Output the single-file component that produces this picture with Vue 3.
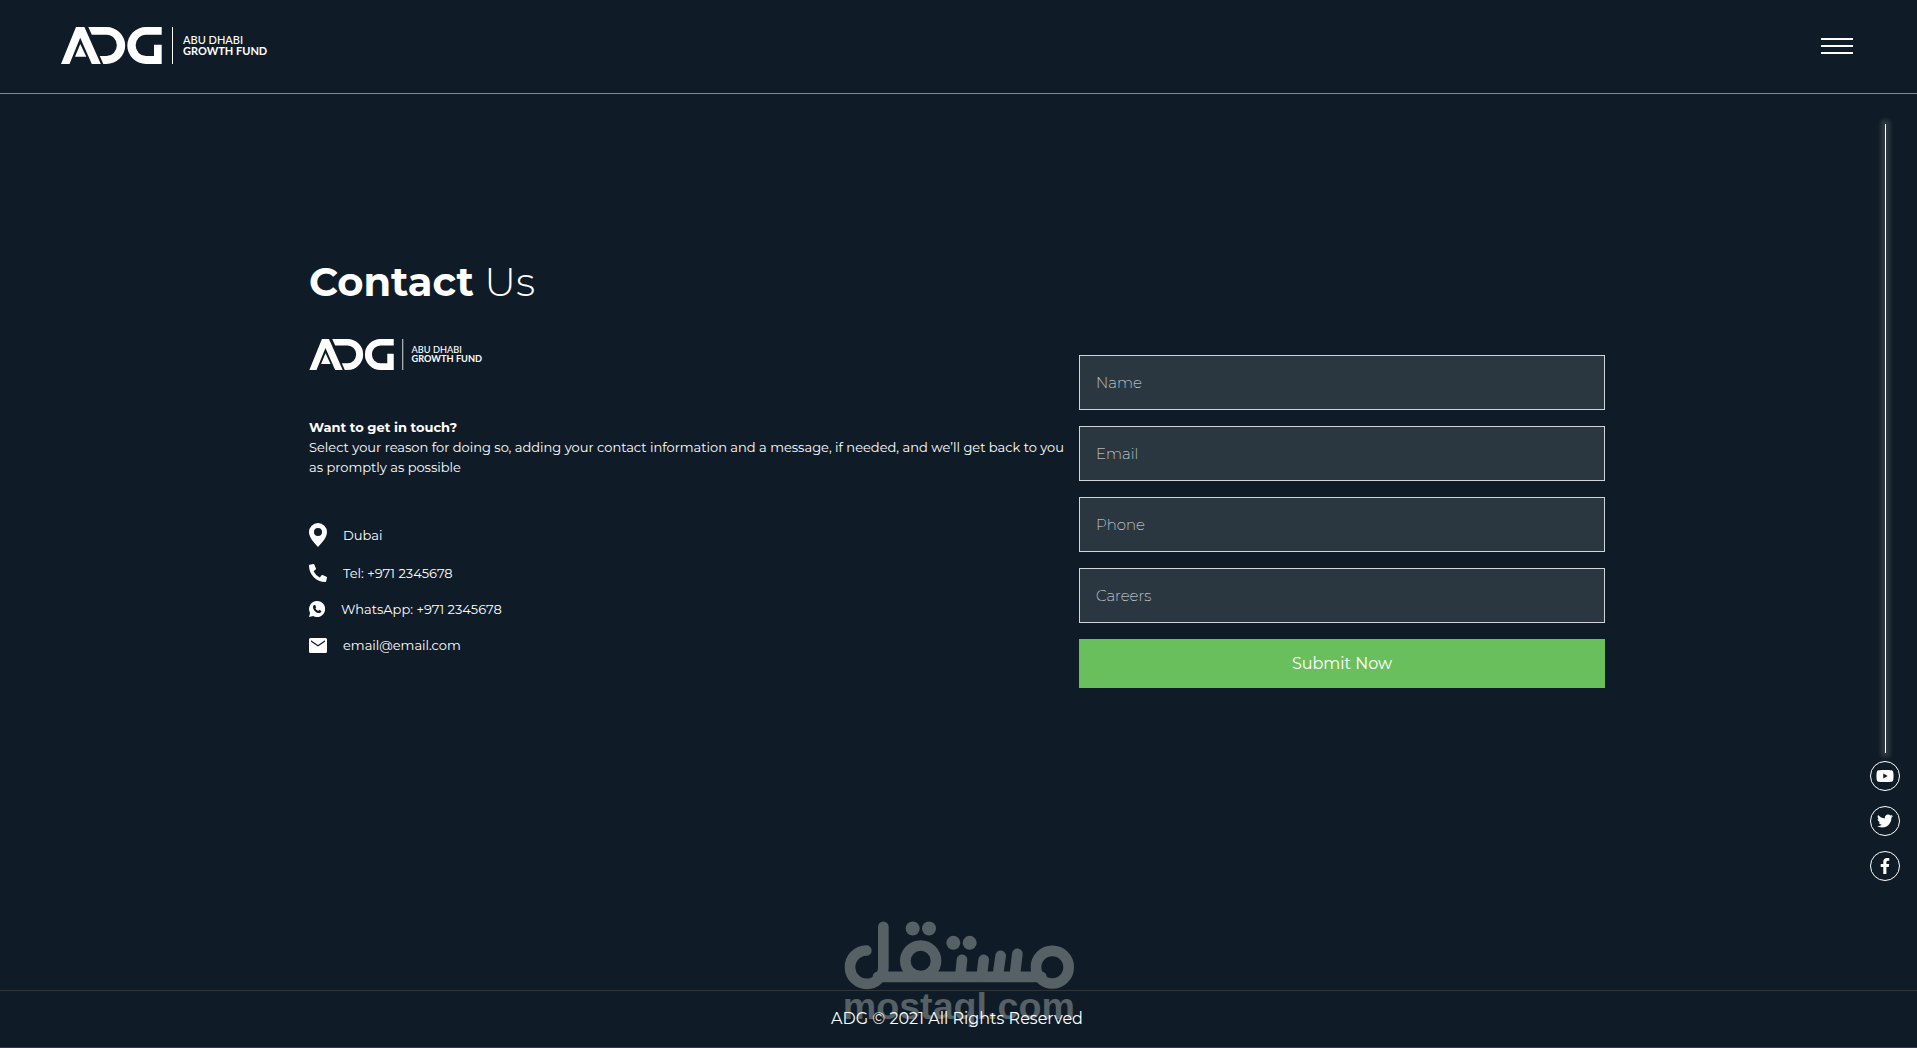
<template>
  <div class="page">
    <header class="header">
      <a href="#" aria-label="Abu Dhabi Growth Fund">
        <svg class="logo" width="208" height="37" viewBox="0 0 208 37">
          <g id="adg-logo">
            <path d="M0 37 15 0h8.400L39.800 37H30.800L19.200 10.800 8.500 37Z" />
            <path d="M19.300 17 25.300 29.700H14Z" />
            <path
              d="M27.300 0H45.500A18.700 18.500 0 0 1 45.500 37H42.300L38.800 29H45.500A10.300 10.600 0 0 0 45.500 7.700H30.800Z"
            />
            <path
              d="M100.700 0H85A18.700 18.500 0 0 0 85 37H100.700V17.700H93V29H85A10.300 10.600 0 0 1 85 7.700H100.700Z"
            />
            <path d="M111 0h1v37h-1z" />
            <text x="122" y="17" class="logo-text">ABU DHABI</text>
            <text x="122" y="28" class="logo-text strong">GROWTH FUND</text>
          </g>
        </svg>
      </a>
      <button class="menu-btn" type="button" aria-label="Menu">
        <span v-for="n in 3" :key="n"></span>
      </button>
    </header>

    <main class="main">
      <div class="container">
        <section class="info">
          <h1><strong>Contact</strong> Us</h1>
          <svg class="logo" width="175" height="31" viewBox="0 0 208 37">
            <use href="#adg-logo" />
          </svg>
          <div class="intro">
            <h2>Want to get in touch?</h2>
            <p>
              Select your reason for doing so, adding your contact information and a message, if
              needed, and we’ll get back to you as promptly as possible
            </p>
          </div>
          <ul class="contacts">
            <li v-for="item in contacts" :key="item.text">
              <svg
                :width="item.width"
                :height="item.height"
                :viewBox="item.viewBox"
                aria-hidden="true"
              >
                <path fill-rule="evenodd" :d="item.path" />
              </svg>
              <span>{{ item.text }}</span>
            </li>
          </ul>
        </section>

        <form class="form" @submit.prevent>
          <input
            v-for="field in fields"
            :key="field.name"
            v-model="form[field.name]"
            :type="field.type"
            :name="field.name"
            :placeholder="field.label"
            :aria-label="field.label"
          />
          <button type="submit">Submit Now</button>
        </form>
      </div>
    </main>

    <aside class="social">
      <div class="social-line"></div>
      <a v-for="item in socials" :key="item.name" href="#" :aria-label="item.name">
        <svg :width="item.width" height="16" :viewBox="item.viewBox"><path :d="item.path" /></svg>
      </a>
    </aside>

    <footer class="footer">
      <svg class="watermark" width="230" height="107" viewBox="98 62 690 320" aria-hidden="true">
        <g class="strokes">
          <path d="M165 150A50 50 0 1 0 216 200V79" />
          <path d="M200 229H690" />
          <circle cx="328" cy="181" r="46" />
          <path d="M452 178 447 228M517 178 511 228M568 166 559 228M618 160 610 228" />
          <circle cx="723" cy="200" r="49" />
        </g>
        <circle cx="304" cy="84" r="21" />
        <circle cx="353" cy="84" r="21" />
        <circle cx="426" cy="127" r="21" />
        <circle cx="475" cy="127" r="21" />
        <text x="94" y="356">mostaql.com</text>
      </svg>
      <p>ADG © 2021 All Rights Reserved</p>
    </footer>
  </div>
</template>

<script setup>
import { reactive } from 'vue'

const form = reactive({
  name: '',
  email: '',
  phone: '',
  careers: ''
})

const fields = [
  { name: 'name', label: 'Name', type: 'text' },
  { name: 'email', label: 'Email', type: 'email' },
  { name: 'phone', label: 'Phone', type: 'tel' },
  { name: 'careers', label: 'Careers', type: 'text' }
]

const contacts = [
  {
    text: 'Dubai',
    width: 18,
    height: 24,
    viewBox: '0 0 18 24',
    path: 'M9 0a9 9 0 0 0-9 9c0 5.500 5 10.500 9 15 4-4.500 9-9.500 9-15a9 9 0 0 0-9-9Zm0 5a4 4 0 1 1 0 8 4 4 0 0 1 0-8Z'
  },
  {
    text: 'Tel: +971 2345678',
    width: 18,
    height: 18,
    viewBox: '0 0 512 512',
    path: 'M497.390 361.800l-112-48a24 24 0 0 0-28 6.900l-49.600 60.600A370.660 370.660 0 0 1 130.600 204.110l60.600-49.600a23.940 23.940 0 0 0 6.900-28l-48-112A24.160 24.160 0 0 0 122.600.610l-104 24A24 24 0 0 0 0 48c0 256.500 207.900 464 464 464a24 24 0 0 0 23.400-18.600l24-104a24.290 24.290 0 0 0-14.010-27.600z'
  },
  {
    text: 'WhatsApp: +971 2345678',
    width: 16,
    height: 16,
    viewBox: '0 0 16 16',
    path: 'M8 0a8 8 0 0 0-6.900 12L0 16l4.100-1.100A8 8 0 1 0 8 0ZM5.200 4h.7c.2 0 .4.1.5.4l.7 1.600c.1.200 0 .4-.1.600l-.6.700c.6 1.200 1.400 2 2.800 2.600l.7-.9c.2-.2.400-.2.600-.1l1.500.8c.3.100.4.300.3.600-.1 1.100-1 1.800-2.100 1.800C6.600 11.900 4 8.500 4 6.200 4 5.200 4.500 4 5.200 4Z'
  },
  {
    text: 'email@email.com',
    width: 18,
    height: 15,
    viewBox: '0 0 18 15',
    path: 'M1.500 0h15A1.500 1.500 0 0 1 18 1.500v12a1.500 1.500 0 0 1-1.500 1.500h-15A1.500 1.500 0 0 1 0 13.500v-12A1.500 1.500 0 0 1 1.500 0ZM2 2.300v1.500l7 4.700 7-4.700V2.300L9 7Z'
  }
]

const socials = [
  {
    name: 'YouTube',
    width: 18,
    viewBox: '0 0 576 512',
    path: 'M549.655 124.083c-6.281-23.650-24.787-42.276-48.284-48.597C458.781 64 288 64 288 64S117.220 64 74.629 75.486c-23.497 6.322-42.003 24.947-48.284 48.597-11.412 42.867-11.412 132.305-11.412 132.305s0 89.438 11.412 132.305c6.281 23.650 24.787 41.500 48.284 47.821C117.220 448 288 448 288 448s170.780 0 213.371-11.486c23.497-6.321 42.003-24.171 48.284-47.821 11.412-42.867 11.412-132.305 11.412-132.305s0-89.438-11.412-132.305zm-317.510 213.508V175.185l142.739 81.205-142.739 81.201z'
  },
  {
    name: 'Twitter',
    width: 16,
    viewBox: '0 0 512 512',
    path: 'M459.370 151.716c.325 4.548.325 9.097.325 13.645 0 138.720-105.583 298.558-298.558 298.558-59.452 0-114.680-17.219-161.137-47.106 8.447.974 16.568 1.299 25.340 1.299 49.055 0 94.213-16.568 130.274-44.832-46.132-.975-84.792-31.188-98.112-72.772 6.498.974 12.995 1.624 19.818 1.624 9.421 0 18.843-1.300 27.614-3.573-48.081-9.747-84.143-51.980-84.143-102.985v-1.299c13.969 7.797 30.214 12.670 47.431 13.319-28.264-18.843-46.781-51.005-46.781-87.391 0-19.492 5.197-37.360 14.294-52.954 51.655 63.675 129.300 105.258 216.365 109.807-1.624-7.797-2.599-15.918-2.599-24.040 0-57.828 46.782-104.934 104.934-104.934 30.213 0 57.502 12.670 76.670 33.137 23.715-4.548 46.456-13.320 66.599-25.340-7.798 24.366-24.366 44.833-46.132 57.827 21.117-2.273 41.584-8.122 60.426-16.243-14.292 20.791-32.161 39.308-52.628 54.253z'
  },
  {
    name: 'Facebook',
    width: 10,
    viewBox: '0 0 320 512',
    path: 'M279.140 288l14.220-92.660h-88.910v-60.130c0-25.350 12.420-50.060 52.240-50.060h40.420V6.260S260.430 0 225.360 0c-73.220 0-121.080 44.380-121.080 124.720v70.620H22.890V288h81.390v224h100.170V288z'
  }
]
</script>

<style>
body {
  margin: 0;
  background: #0f1c28;
}
</style>

<style scoped>
.page {
  position: relative;
  display: flex;
  flex-direction: column;
  min-height: 100vh;
  color: #fff;
  background: #0f1c28;
  font-family: Montserrat, Inter, sans-serif;
  font-size: 13px;
  line-height: 20px;
}

h1,
h2,
p,
ul {
  margin: 0;
  padding: 0;
}

.logo {
  display: block;
  fill: #fff;
}

.logo-text {
  font-family: Lato, sans-serif;
  font-size: 11px;
  font-weight: 500;
}

.logo-text.strong {
  font-weight: 700;
}

/* Header */
.header {
  display: flex;
  align-items: center;
  justify-content: space-between;
  padding: 27px 64px 29px 61px;
  border-bottom: 1px solid #85898c;
}

.menu-btn {
  display: flex;
  flex-direction: column;
  gap: 5px;
  width: 32px;
  padding: 0;
  border: 0;
  background: none;
  cursor: pointer;
}

.menu-btn span {
  height: 2px;
  background: #fff;
}

/* Contact */
.main {
  flex: 1;
  padding: 164px 3px 64px 0;
}

.container {
  display: grid;
  grid-template-columns: 7fr 5fr;
  box-sizing: border-box;
  max-width: 1320px;
  margin: 0 auto;
}

.info {
  padding-left: 12px;
}

.form {
  display: flex;
  flex-direction: column;
  gap: 16px;
  padding: 97px 12px 0;
}

h1 {
  margin-bottom: 33px;
  font-size: 40px;
  font-weight: 300;
  line-height: 48px;
}

h1 strong {
  font-weight: 700;
}

.intro {
  margin: 47px 0 46px;
}

h2 {
  font-size: 13px;
  font-weight: 700;
  line-height: 20px;
}

.contacts {
  display: flex;
  flex-direction: column;
  gap: 16px;
  list-style: none;
}

.contacts li {
  display: flex;
  align-items: center;
  gap: 16px;
}

.contacts svg {
  fill: #fff;
}

.form input {
  box-sizing: border-box;
  width: 100%;
  height: 55px;
  padding: 0 16px;
  border: 1px solid #ced4da;
  border-radius: 0;
  outline: none;
  color: #fff;
  background: #2a3741;
  font: inherit;
  font-size: 15px;
  font-weight: 300;
}

.form input::placeholder {
  color: #e4e7e9;
  font-weight: 200;
  opacity: 1;
}

.form button {
  height: 49px;
  border: 0;
  color: #fff;
  background: #6abf5d;
  font: inherit;
  font-size: 16px;
  cursor: pointer;
}

/* Social rail floats over the right edge */
.social {
  position: absolute;
  top: 124px;
  right: 17px;
  display: flex;
  flex-direction: column;
  align-items: center;
  gap: 15px;
}

.social-line {
  width: 1px;
  height: 60vh;
  margin-bottom: -7px;
  background: #fff;
  box-shadow: 0 0 4px 4px rgba(255, 240, 225, 0.14);
}

.social a {
  display: flex;
  align-items: center;
  justify-content: center;
  box-sizing: border-box;
  width: 30px;
  height: 30px;
  border: 1px solid #fff;
  border-radius: 50%;
}

.social svg {
  fill: #fff;
}

/* Footer */
.footer {
  position: relative;
  padding: 16px 3px 16px 0;
  border-top: 1px solid #2f3539;
  border-bottom: 1px solid #4b2a6b;
  font-size: 16px;
  line-height: 24px;
  text-align: center;
}

.footer p {
  position: relative;
}

.watermark {
  position: absolute;
  top: -70px;
  left: 50%;
  transform: translateX(-50%);
  overflow: visible;
  fill: #566166;
}

.watermark .strokes {
  fill: none;
  stroke: #566166;
  stroke-width: 32;
  stroke-linecap: round;
}

.watermark text {
  font-family: 'Liberation Sans', Arial, sans-serif;
  font-size: 113px;
  font-weight: 700;
}
</style>
